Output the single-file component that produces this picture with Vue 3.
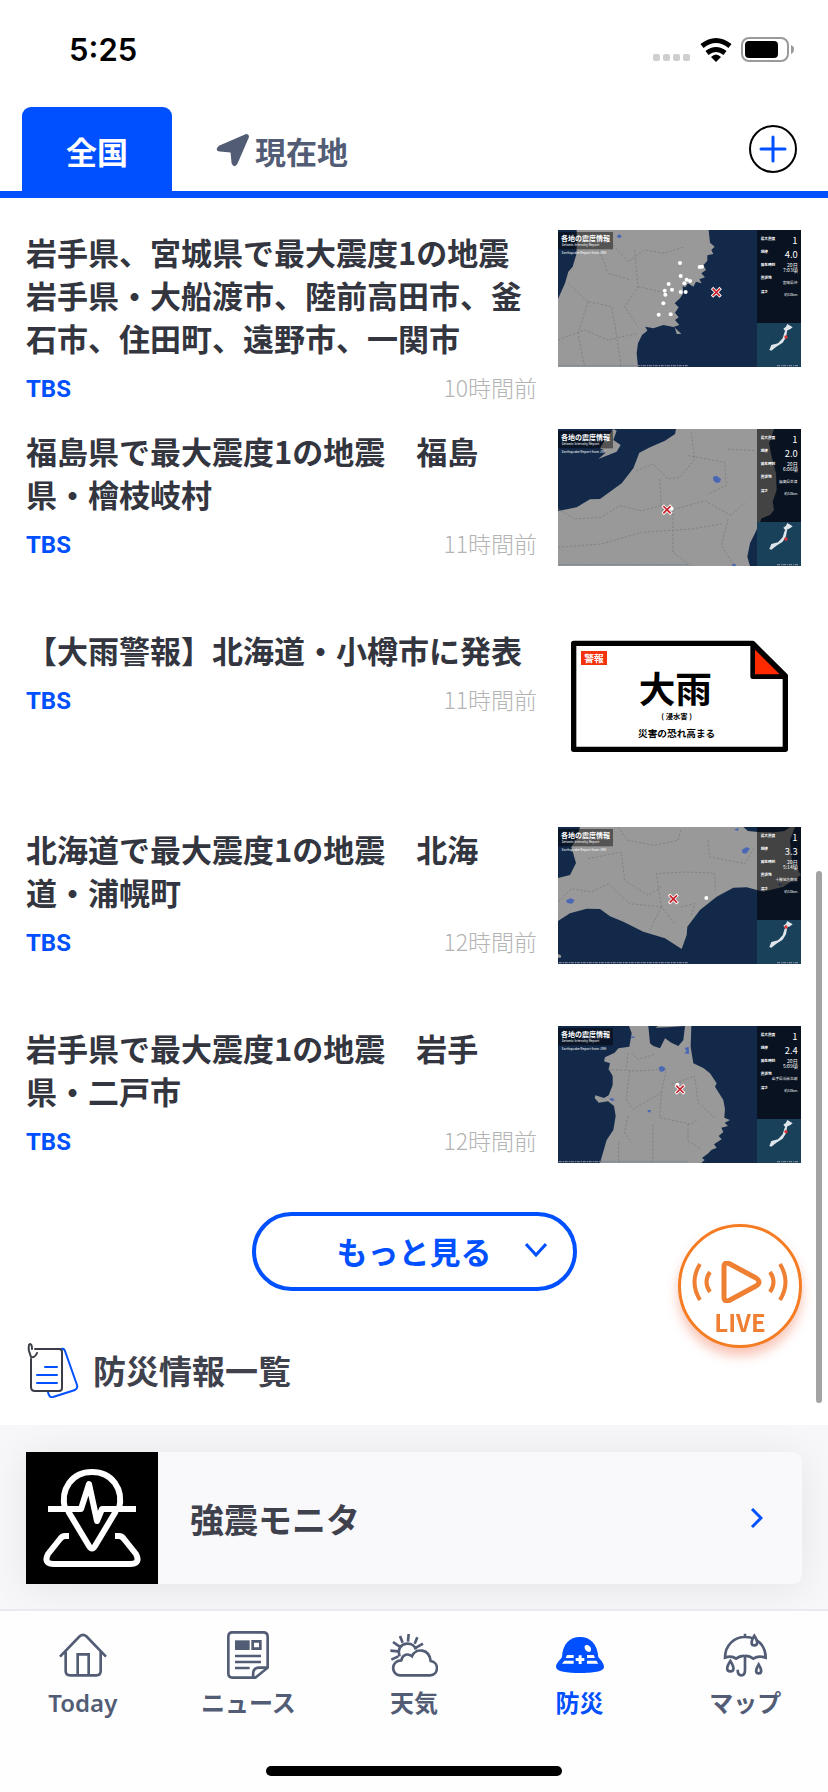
<template>
  <div class="page">
    <header>
      <div class="status-bar">
        <span class="clock">5:25</span>
        <svg class="status-icons" viewBox="0 0 142 28" aria-hidden="true">
          <g fill="#cfcfcf">
            <rect v-for="n in 4" :key="n" :x="(n - 1) * 10" y="18" width="7" height="7" rx="2" />
          </g>
          <g fill="none" stroke="#000" stroke-width="5">
            <path d="M49 10 Q63 -1 77 10" />
            <path d="M54 17 Q63 10 72 17" />
          </g>
          <path d="M58 21 Q63 16 68 21 L63 26 Z" />
          <rect x="89" y="2" width="46" height="23" rx="7" fill="none" stroke="#9a9a9a" stroke-width="2" />
          <rect x="92" y="5" width="33" height="17" rx="4" />
          <path d="M138 9 Q141 10 141 13 Q141 17 138 18 Z" fill="#9a9a9a" />
        </svg>
      </div>
      <div class="area-tabs">
        <button class="area active" type="button">全国</button>
        <button class="area" type="button">
          <svg class="arrow" viewBox="0 0 34 34" aria-hidden="true">
            <path d="M31 0 L3 12 Q-2 17 4 18 L15 19 L16 30 Q18 36 22 31 L34 3 Q34 0 31 0 Z" fill="#525d75" />
          </svg>
          現在地
        </button>
        <button class="add" type="button" aria-label="地域を追加">
          <svg viewBox="0 0 48 48" aria-hidden="true">
            <circle cx="24" cy="24" r="23" fill="#fff" stroke="#000" stroke-width="2" />
            <path d="M24 12 V36 M12 24 H36" stroke="#0050ff" stroke-width="3" stroke-linecap="round" />
          </svg>
        </button>
      </div>
    </header>

    <main>
      <ul class="news-list">
        <li v-for="item in news" :key="item.title">
          <a class="news" href="#">
            <div class="body">
              <h2>{{ item.title }}</h2>
              <div class="meta">
                <span class="source">TBS</span>
                <span class="time">{{ item.time }}</span>
              </div>
            </div>
            <svg v-if="item.map" class="thumb" viewBox="0 0 729 411" aria-hidden="true">
              <rect width="729" height="411" fill="#13294a" />
              <path v-for="d in item.map.land" :key="d" :d="d" fill="#999" />
              <path :d="item.map.borders" fill="none" stroke="#777" stroke-width="2" stroke-dasharray="7 5" />
              <path :d="item.map.lakes" fill="#4a67b5" />
              <rect x="597" width="132" height="280" fill="#000" fill-opacity=".56" />
              <rect x="597" y="279" width="132" height="132" fill="#19415a" />
              <rect x="0" y="6" width="165" height="52" fill="#000" fill-opacity=".45" />
              <g fill="#fff">
                <text x="9" y="32" font-size="21" font-weight="700">各地の震度情報</text>
                <text x="11" y="47" font-size="10">Seismic Intensity Report</text>
                <text x="11" y="72" font-size="10">Earthquake Report from JMA</text>
                <g font-size="11" font-weight="700">
                  <text x="608" y="30">最大震度</text>
                  <text x="608" y="70">規模</text>
                  <text x="608" y="109">発生時刻</text>
                  <text x="608" y="147">震源地</text>
                  <text x="608" y="188">深さ</text>
                </g>
                <g text-anchor="end">
                  <text x="718" y="43" font-size="28">1</text>
                  <text x="719" y="83" font-size="28">{{ item.map.magnitude }}</text>
                  <text x="719" y="111" font-size="15">20日</text>
                  <text x="719" y="126" font-size="15">{{ item.map.clock }}頃</text>
                  <text x="718" y="162" font-size="11">{{ item.map.center }}</text>
                  <text x="718" y="198" font-size="11">約10km</text>
                </g>
                <circle v-for="(p, i) in item.map.points" :key="i" :cx="p[0]" :cy="p[1]" r="6" />
              </g>
              <path
                d="M634 360 L640 345 L660 340 L674 325 L680 305 L688 300 L684 322 L674 338 L655 350 L640 362 Z M676 296 L684 290 L688 282 L704 292 L696 298 L682 304 Z"
                fill="#dfe5ea"
              />
              <circle cx="684" :cy="item.map.mark" r="5" fill="#d33" />
              <path d="M2 407 H390 M657 407 H722" stroke="#7b8797" stroke-width="4" stroke-dasharray="9 3 4 2" />
              <g :transform="`translate(${item.map.epicenter})`">
                <path d="M-13 -13 L13 13 M13 -13 L-13 13" stroke="#fff" stroke-width="10" />
                <path d="M-11 -11 L11 11 M11 -11 L-11 11" stroke="#c8202a" stroke-width="5" />
              </g>
            </svg>
            <svg v-else class="thumb" viewBox="0 0 729 411" aria-hidden="true">
              <path d="M47 46 H584 L682 144 V364 H47 Z" fill="#fff" stroke="#000" stroke-width="16" stroke-linejoin="round" />
              <path d="M584 48 V146 H682 Z" fill="#ff2a00" stroke="#000" stroke-width="14" stroke-linejoin="round" />
              <rect x="69" y="69" width="78" height="42" fill="#f2330d" />
              <text x="108" y="101" font-size="29" font-weight="700" text-anchor="middle" fill="#fff">警報</text>
              <text x="352" y="226" font-size="110" font-weight="700" text-anchor="middle">大雨</text>
              <text x="356" y="272" font-size="22" font-weight="700" text-anchor="middle">( 浸水害 )</text>
              <text x="356" y="326" font-size="29" font-weight="700" text-anchor="middle">災害の恐れ高まる</text>
            </svg>
          </a>
        </li>
      </ul>

      <button class="more" type="button">
        もっと見る
        <svg viewBox="0 0 22 14" aria-hidden="true">
          <path d="M1 1 L11 12 L21 1" fill="none" stroke="#0050ff" stroke-width="3" />
        </svg>
      </button>

      <h2 class="section-title">
        <svg viewBox="0 0 52 56" fill="none" stroke-width="2" stroke-linecap="round" stroke-linejoin="round" aria-hidden="true">
          <path d="M34 7 Q37 6 38 9 L50 43 Q51 46 48 48 L26 55 Q22 56 21 50" stroke="#0050ff" />
          <path d="M8 7 H32 Q35 7 35 10 V46 Q35 49 32 49 H8 Q4 49 4 45 V17" stroke="#3a3d48" />
          <path d="M5 7 Q5 2 3 2 Q1 3 2 9 L4 15 Q8 16 10 11" stroke="#3a3d48" />
          <path d="M18 25 H30 M10 33 H30 M10 41 H30" stroke="#0050ff" />
        </svg>
        防災情報一覧
      </h2>
    </main>

    <section class="services">
      <a class="service" href="#">
        <svg class="service-icon" viewBox="0 0 132 132" fill="none" stroke="#fff" stroke-width="6" stroke-linejoin="round" aria-hidden="true">
          <rect width="132" height="132" fill="#000" stroke="none" />
          <path d="M39 57 C34 37 46 20 66 20 C86 20 98 37 93 57" />
          <path d="M42 59 L63 94 Q66 99 69 94 L90 59" />
          <path d="M22 57 H55 L63 32 L71 69 L76 57 H110" />
          <path d="M43 84 H39 Q36 84 34 87 L22 102 Q17 112 28 112 H104 Q115 112 110 102 L98 87 Q96 84 93 84 H89" />
        </svg>
        <span class="service-name">強震モニタ</span>
        <svg class="chevron" viewBox="0 0 12 20" aria-hidden="true">
          <path d="M1 1 L10 10 L1 19" fill="none" stroke="#0050ff" stroke-width="3" />
        </svg>
      </a>
    </section>

    <nav class="tab-bar">
      <a v-for="tab in tabs" :key="tab.label" href="#" :class="{ current: tab.current }">
        <svg viewBox="0 0 144 144" aria-hidden="true">
          <path v-if="tab.stroke" :d="tab.stroke" class="line" />
          <path v-if="tab.fill" :d="tab.fill" fill="currentColor" />
          <path v-if="tab.over" :d="tab.over" class="line over" />
          <path v-if="tab.cut" :d="tab.cut" fill="#fff" />
        </svg>
        <span>{{ tab.label }}</span>
      </a>
      <div class="home-indicator"></div>
    </nav>

    <button class="live" type="button">
      <svg viewBox="0 0 96 42" fill="none" stroke="#ee7f33" stroke-width="4" aria-hidden="true">
        <path d="M32 6 Q32 0 38 3 L64 17 Q70 21 64 25 L38 39 Q32 42 32 36 Z" stroke-width="5" stroke-linejoin="round" />
        <path d="M18 11 Q11 21 18 31 M8 3 Q-3 21 8 39 M78 11 Q85 21 78 31 M88 3 Q99 21 88 39" />
      </svg>
      LIVE
    </button>
    <div class="scroll-thumb"></div>
  </div>
</template>

<script setup>
const news = [
  {
    title: '岩手県、宮城県で最大震度1の地震 岩手県・大船渡市、陸前高田市、釜石市、住田町、遠野市、一関市',
    time: '10時間前',
    map: {
      land: [
        'M56 0 L56 70 L44 110 L31 125 L21 160 L0 207 V411 H240 L236 370 L240 340 L252 315 L268 302 L262 290 L286 295 L316 285 L350 292 L356 312 L370 312 L348 290 L364 285 L351 270 L362 262 L351 248 L362 232 L350 220 L366 205 L376 190 L374 168 L382 172 L390 160 L406 170 L414 155 L431 160 L424 148 L441 142 L430 130 L444 120 L436 106 L448 92 L448 76 L466 72 L460 60 L470 50 L456 38 L452 0 Z'
      ],
      borders: 'M165 45 L210 95 L260 60 L320 70 L380 50 M120 50 L150 130 L220 150 M30 160 L90 215 L160 230 L170 280 M230 60 L240 170 L200 230 L240 290 M240 170 L330 190 M0 330 L80 300 L150 330 L240 310 M90 215 L60 310 L80 411 M170 280 L190 411',
      lakes: 'M178 16 L186 13 L191 20 L184 25 L178 22 Z',
      points: [[366, 99], [425, 111], [432, 110], [368, 138], [332, 162], [342, 179], [320, 182], [322, 194], [386, 149], [396, 153], [379, 160], [368, 186], [383, 186], [316, 220], [302, 254], [338, 253]],
      epicenter: '475 187',
      magnitude: '4.0',
      clock: '7:03',
      center: '宮城県沖',
      mark: 321
    }
  },
  {
    title: '福島県で最大震度1の地震　福島県・檜枝岐村',
    time: '11時間前',
    map: {
      land: [
        'M354 0 L351 15 L321 35 L276 55 L244 71 L226 118 L191 163 L126 210 L96 211 L56 235 L0 246 V411 H576 L568 383 L576 343 L591 313 L611 268 L636 258 L648 243 L644 218 L656 183 L654 133 L641 83 L633 43 L641 23 L648 0 Z',
        'M166 0 L176 5 L166 33 L188 48 L176 68 L121 90 L146 68 L126 58 L141 33 Z'
      ],
      borders: 'M235 125 L285 105 L330 150 L365 145 L410 90 L400 10 M390 80 L500 100 L505 170 L450 195 M305 150 L310 230 L345 242 L440 215 L520 260 L560 220 M0 240 L50 270 L130 265 L185 230 L250 245 L310 230 M0 355 L130 345 L250 310 L400 300 L490 285 M345 242 L345 370 L400 411 M510 60 L590 65 M510 270 L490 350 L530 411',
      lakes: 'M465 144 L476 140 L489 150 L486 160 L474 162 L466 154 Z M524 404 L534 406 L532 411 L522 411 Z',
      points: [[341, 239]],
      epicenter: '327 242',
      magnitude: '2.0',
      clock: '6:06',
      center: '福島県会津',
      mark: 330
    }
  },
  {
    title: '【大雨警報】北海道・小樽市に発表',
    time: '11時間前'
  },
  {
    title: '北海道で最大震度1の地震　北海道・浦幌町',
    time: '12時間前',
    map: {
      land: [
        'M66 0 L56 35 L40 60 L54 108 L36 144 L0 153 V282 L36 259 L86 245 L126 246 L156 268 L196 284 L256 314 L321 334 L371 366 L386 324 L388 299 L426 249 L476 209 L526 182 L566 181 L616 194 L676 179 L729 144 L701 99 L696 39 L711 0 L696 0 L680 12 L650 16 L600 15 L570 12 L556 0 Z',
        'M0 380 L10 386 L8 392 H0 Z'
      ],
      borders: 'M180 0 L210 40 L290 55 L360 40 L370 5 M90 95 L190 75 L200 160 L270 205 L310 180 M310 240 L295 140 L380 135 L470 138 L472 190 M450 40 L455 90 L560 110 L590 60 M0 225 L40 185 L100 195 L150 170 M150 170 L215 230 L310 240 L350 290 M310 240 L275 310 M370 240 L410 230 L400 265',
      lakes: 'M24 220 L38 214 L50 219 L42 230 L28 228 Z M552 68 L566 60 L576 65 L564 80 L553 78 Z M528 8 L542 2 L540 12 Z M660 168 L672 172 L664 178 Z',
      points: [[445, 213]],
      epicenter: '346 216',
      magnitude: '3.3',
      clock: '5:14',
      center: '十勝地方南部',
      mark: 300
    }
  },
  {
    title: '岩手県で最大震度1の地震　岩手県・二戸市',
    time: '12時間前',
    map: {
      land: [
        'M213 0 L221 22 L214 62 L181 67 L170 80 L141 94 L138 106 L156 112 L152 130 L164 150 L164 177 L152 208 L138 216 L112 208 L110 216 L122 230 L150 226 L168 240 L173 270 L166 312 L146 342 L126 411 H430 L440 402 L432 396 L451 382 L460 372 L476 365 L468 355 L491 340 L482 330 L496 318 L490 305 L510 300 L500 290 L516 282 L499 275 L501 250 L496 222 L471 182 L476 172 L456 142 L436 126 L406 112 L398 62 L400 0 H381 L376 42 L361 60 L340 50 L321 37 L306 67 L286 60 L276 52 L271 0 Z',
        'M292 5 L330 4 L380 0 H300 Z'
      ],
      borders: 'M150 130 L240 135 L325 130 L310 200 L305 275 L400 295 L420 280 M215 135 L205 220 L225 250 L285 215 L310 200 M210 270 L200 320 L220 350 M340 175 L410 150 L420 230 L470 275 M285 295 L285 411 M390 295 L390 345 L430 370 M220 80 L240 100 L290 85 M182 350 V411 M210 80 L205 130',
      lakes: 'M302 124 L312 120 L322 126 L318 136 L306 137 Z M380 66 L392 62 L393 84 L378 82 L386 76 Z M218 32 L230 31 L228 36 L218 36 Z M154 218 L164 216 L170 224 L160 224 Z M269 252 L278 252 L278 259 L270 259 Z',
      points: [[358, 176]],
      epicenter: '366 190',
      magnitude: '2.4',
      clock: '5:09',
      center: '岩手県沿岸北部',
      mark: 317
    }
  }
]

const tabs = [
  {
    label: 'Today',
    stroke: 'M3 77 L62 16 Q72 7 82 16 L141 77 M20 62 V120 Q20 133 33 133 H112 Q125 133 125 120 V62 M56 133 V70 H89 V133'
  },
  {
    label: 'ニュース',
    stroke: 'M25 4 H118 Q131 4 131 17 V110 L94 140 H25 Q13 140 13 127 V17 Q13 4 25 4 Z M88 138 Q84 110 104 110 H131 M86 31 H109 V53 H86 Z M33 75 H111 M33 93 H111 M33 111 H77',
    fill: 'M33 28 H77 V57 H33 Z'
  },
  {
    label: '天気',
    stroke: 'M29 76 C22 54 32 40 50 38 C66 37 76 46 77 56 M1 59 L24 61 M9 33 L29 47 M30 15 L38 35 M56 9 L54 32 M82 19 L74 38 M99 38 L78 50 M4 86 L25 76',
    over: 'M30 133 C3 131 1 90 34 88 C38 70 54 66 66 76 C78 48 118 54 122 90 C148 94 147 132 120 133 Z'
  },
  {
    label: '防災',
    current: true,
    fill: 'M18 78 C20 40 40 18 72 18 C104 18 124 40 127 78 C134 88 144 96 144 108 C144 122 110 126 72 126 C34 126 0 122 0 108 C0 96 12 88 18 78 Z',
    cut: 'M86 46 C90 38 102 42 105 52 C107 62 100 66 93 61 C87 57 85 51 86 46 Z M33 72 H53 V81 H29 Z M25 89 H53 V98 H18 Z M93 72 H113 L117 81 H93 Z M93 89 H121 L127 98 H93 Z M68 73 H77 V81 H85 V90 H77 V99 H68 V90 H59 V81 H68 Z'
  },
  {
    label: 'マップ',
    stroke: 'M12 80 C12 42 40 18 72 18 C106 18 134 42 134 80 Q112 73 97 83 Q84 73 72 75 Q58 73 45 83 Q32 73 12 80 Z M72 8 V18 M72 75 V118 Q72 133 61 133 Q50 133 50 116 M28 90 C15 110 16 121 28 121 C40 121 41 110 28 90 Z M113 100 C102 118 104 127 113 127 C122 127 124 118 113 100 Z',
    over: 'M100 14 C89 32 89 43 100 43 C111 43 112 32 100 14 Z'
  }
]
</script>

<style>
body {
  margin: 0;
}
</style>

<style scoped>
.page {
  position: relative;
  display: flex;
  flex-direction: column;
  min-height: 100vh;
  background: #fff;
  color: #33353f;
  font-family: "Noto Sans CJK JP", sans-serif;
}

a {
  color: inherit;
  text-decoration: none;
}

button {
  padding: 0;
  border: 0;
  background: none;
  color: inherit;
  font-family: inherit;
  cursor: pointer;
}

.status-bar {
  display: flex;
  justify-content: space-between;
  align-items: center;
  height: 99px;
  padding: 0 33px 8px 69px;
}

.clock {
  color: #000;
  font-family: Inter, sans-serif;
  font-size: 31px;
  font-weight: 600;
}

.status-icons {
  width: 142px;
  height: 28px;
}

.area-tabs {
  display: flex;
  align-items: stretch;
  height: 84px;
  padding: 0 31px 0 22px;
  border-bottom: 7px solid #0050ff;
}

.area {
  display: flex;
  align-items: center;
  justify-content: center;
  gap: 6px;
  padding: 3px 44px 0;
  border-radius: 9px 9px 0 0;
  color: #525d75;
  font-size: 31px;
  font-weight: 700;
}

.area.active {
  background: #0050ff;
  color: #fff;
}

.arrow {
  width: 33px;
  height: 33px;
}

.add {
  align-self: center;
  width: 48px;
  height: 48px;
  margin-left: auto;
}

.add svg {
  display: block;
}

.news-list {
  display: flex;
  flex-direction: column;
  gap: 24px;
  margin: 0;
  padding: 32px 27px 0 26px;
  list-style: none;
}

.news {
  display: grid;
  grid-template-columns: 1fr 243px;
  gap: 21px;
  align-items: start;
  min-height: 175px;
}

.news h2 {
  margin: 0;
  font-size: 31px;
  font-weight: 700;
  line-height: 43px;
}

.meta {
  display: flex;
  justify-content: space-between;
  align-items: baseline;
  margin-top: 12px;
  line-height: 32px;
}

.source {
  color: #0050ff;
  font-family: Roboto, sans-serif;
  font-size: 24px;
  font-weight: 700;
}

.time {
  color: #b4b4b4;
  font-size: 23px;
  font-weight: 300;
}

.thumb {
  display: block;
  width: 100%;
}

.more {
  display: grid;
  grid-template-columns: 1fr auto 1fr;
  align-items: center;
  width: 325px;
  height: 79px;
  margin: 11px auto 0;
  padding-bottom: 3px;
  border: 4px solid #0050ff;
  border-radius: 40px;
  background: #fff;
  color: #0050ff;
  font-size: 31px;
  font-weight: 700;
}

.more::before {
  content: "";
}

.more svg {
  justify-self: end;
  width: 22px;
  height: 14px;
  margin-right: 26px;
}

.section-title {
  display: flex;
  align-items: center;
  gap: 14px;
  margin: 51px 27px 27px;
  color: #3f424d;
  font-size: 33px;
  font-weight: 700;
  line-height: 56px;
}

.section-title svg {
  width: 52px;
  height: 56px;
}

.services {
  flex: 1;
  padding: 27px 26px 25px;
  background: #f7f7f9;
  overflow: hidden;
}

.service {
  display: flex;
  align-items: center;
  padding-right: 39px;
  border-radius: 0 9px 9px 0;
  background: #f9f9fc;
  box-shadow: 0 4px 40px rgba(0, 0, 0, 0.08);
}

.service-icon {
  width: 132px;
  height: 132px;
}

.service-name {
  flex: 1;
  margin-left: 32px;
  color: #3f424d;
  font-size: 34px;
  font-weight: 700;
}

.chevron {
  width: 12px;
  height: 20px;
}

.tab-bar {
  display: grid;
  grid-template-columns: repeat(5, 1fr);
  align-content: start;
  justify-items: center;
  padding: 20px 0 16px;
  border-top: 2px solid #e9e9f0;
  background: #fefeff;
  color: #525d75;
}

.tab-bar a {
  display: flex;
  flex-direction: column;
  align-items: center;
  gap: 6px;
  font-family: "Noto Sans", "Noto Sans CJK JP", sans-serif;
  font-size: 24px;
  font-weight: 600;
  line-height: 36px;
}

.tab-bar svg {
  width: 48px;
  height: 48px;
}

.tab-bar .current {
  color: #0050ff;
  font-weight: 700;
}

.line {
  fill: none;
  stroke: currentColor;
  stroke-width: 8;
}

.over {
  fill: #fff;
}

.home-indicator {
  grid-column: 1 / -1;
  width: 296px;
  height: 10px;
  margin-top: 45px;
  border-radius: 5px;
  background: #000;
}

.live {
  position: fixed;
  right: 26px;
  bottom: 444px;
  display: flex;
  flex-direction: column;
  align-items: center;
  gap: 3px;
  box-sizing: border-box;
  width: 124px;
  height: 124px;
  padding-top: 34px;
  border: 3px solid #f57c22;
  border-radius: 50%;
  background: #fff;
  box-shadow: 0 8px 12px rgba(235, 90, 50, 0.35);
  color: #ee7f33;
  font-size: 24px;
  font-weight: 700;
  line-height: 32px;
}

.live svg {
  flex: none;
  width: 96px;
  height: 42px;
}

.scroll-thumb {
  position: fixed;
  top: 871px;
  right: 6px;
  width: 6px;
  height: 532px;
  border-radius: 3px;
  background: #a3a3a3;
}
</style>
